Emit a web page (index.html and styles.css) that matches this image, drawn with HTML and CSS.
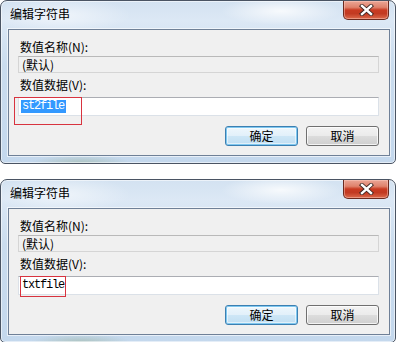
FILE: index.html
```html
<!DOCTYPE html>
<html lang="zh-CN">
<head>
<meta charset="utf-8">
<title>编辑字符串</title>
<link rel="stylesheet" href="styles.css">
</head>
<body>
<div class="stack">
  <div class="dialog">
    <div class="titlebar">
      <span class="title">编辑字符串</span>
      <div class="close">
        <svg width="15" height="12" viewBox="0 0 15 12"><path d="M3 2 L12 10 M12 2 L3 10" stroke="#3b2420" stroke-width="4.2" stroke-linecap="square" fill="none"/><path d="M3 2 L12 10 M12 2 L3 10" stroke="#fff" stroke-width="2.4" stroke-linecap="square" fill="none"/></svg>
      </div>
    </div>
    <div class="panel">
      <div class="label">数值名称(N):</div>
      <div class="field readonly">(默认)</div>
      <div class="label second">数值数据(V):</div>
      <div class="field edit"><span class="mono sel">st2file</span><span class="mark mark-a"></span></div>
      <div class="buttons">
        <div class="btn default">确定</div>
        <div class="btn">取消</div>
      </div>
    </div>
  </div>

  <div class="dialog">
    <div class="titlebar">
      <span class="title">编辑字符串</span>
      <div class="close">
        <svg width="15" height="12" viewBox="0 0 15 12"><path d="M3 2 L12 10 M12 2 L3 10" stroke="#3b2420" stroke-width="4.2" stroke-linecap="square" fill="none"/><path d="M3 2 L12 10 M12 2 L3 10" stroke="#fff" stroke-width="2.4" stroke-linecap="square" fill="none"/></svg>
      </div>
    </div>
    <div class="panel">
      <div class="label">数值名称(N):</div>
      <div class="field readonly">(默认)</div>
      <div class="label second">数值数据(V):</div>
      <div class="field edit"><span class="mono">txtfile</span><span class="mark mark-b"></span></div>
      <div class="buttons">
        <div class="btn default">确定</div>
        <div class="btn">取消</div>
      </div>
    </div>
  </div>
</div>
</body>
</html>
```

FILE: styles.css
```css
* { box-sizing: border-box; }
html, body { margin: 0; padding: 0; background: #fff; }
body {
  font-family: "Noto Sans CJK SC", "Liberation Sans", sans-serif;
  font-size: 12px;
  color: #000;
}
.stack {
  display: flex;
  flex-direction: column;
  gap: 15px;
  width: 397px;
}
.dialog {
  width: 396px;
  height: 164px;
  border: 1px solid #4a5463;
  border-radius: 7px 7px 5px 5px;
  padding: 0 5px 7px 7px;
  display: flex;
  flex-direction: column;
  background:
    radial-gradient(ellipse 40px 10px at 270px 40px, rgba(150,170,200,0.55), rgba(150,170,200,0) 100%),
    radial-gradient(ellipse 60px 14px at 280px 10px, rgba(255,255,255,0.8), rgba(255,255,255,0) 100%),
    radial-gradient(ellipse 70px 18px at 60px 14px, rgba(255,255,255,0.55), rgba(255,255,255,0) 100%),
    radial-gradient(ellipse 50px 8px at 80px 162px, rgba(150,175,150,0.5), rgba(150,175,150,0) 100%),
    linear-gradient(180deg, #d3e2f1 0%, #dce8f5 12%, #cadcee 40%, #c4d8ed 100%);
  box-shadow: inset 0 0 0 1px rgba(255,255,255,0.55);
}
.titlebar {
  height: 28px;
  display: flex;
  justify-content: space-between;
  align-items: flex-start;
}
.title {
  padding: 4px 0 0 2px;
  font-size: 12px;
  line-height: 18px;
  color: #000;
}
.close {
  width: 46px;
  height: 19px;
  margin-right: 1px;
  border: 1px solid #6b2a1f;
  border-top: none;
  border-radius: 0 0 5px 5px;
  background: linear-gradient(180deg, #eba696 0%, #df826c 35%, #c93b22 50%, #c23a22 70%, #dc6a4c 100%);
  box-shadow: inset 0 0 0 1px rgba(255,210,200,0.45);
  display: flex;
  align-items: center;
  justify-content: center;
}
.close svg { display: block; }
.panel {
  height: 127px;
  border: 1px solid #6f8097;
  background: #f0f0f0;
  padding: 9px 10px 8px 9px;
  display: flex;
  flex-direction: column;
  box-shadow: 0 0 0 1px rgba(255,255,255,0.6);
}
.label {
  height: 16px;
  line-height: 16px;
  padding-left: 2px;
  font-size: 12px;
  color: #000;
}
.label.second { margin-top: 4px; }
.field {
  position: relative;
  display: flex;
  align-items: center;
  padding-left: 3px;
}
.readonly {
  height: 17px;
  margin-top: 1px;
  border: 1px solid #d5d5d5;
  border-top-color: #b9b9b9;
  background: #f0f0f0;
  font-size: 12px;
  line-height: 15px;
}
.edit {
  height: 19px;
  margin-top: 4px;
  border: 1px solid #dbe1e8;
  border-top-color: #abadb3;
  background: #fff;
}
.mono {
  font-family: "Liberation Mono", "DejaVu Sans Mono", monospace;
  font-size: 12px;
  letter-spacing: -1.2px;
  line-height: 13px;
  color: #000;
}
.sel {
  background: #3399ff;
  color: #fff;
  padding: 0 2px 0 1px;
  margin-left: -1px;
}
.mark {
  position: absolute;
  border: 1px solid #d8333f;
}
.mark-a { left: -5px; top: -1px; width: 68px; height: 28px; }
.mark-b { left: 1px; top: -1px; width: 46px; height: 21px; }
.buttons {
  display: flex;
  justify-content: flex-end;
  gap: 8px;
  margin-top: 10px;
}
.btn {
  width: 73px;
  height: 20px;
  border: 1px solid #707070;
  border-radius: 3px;
  background: linear-gradient(180deg, #f3f3f3 0%, #ebebeb 48%, #dcdcdc 52%, #cfcfcf 100%);
  box-shadow: inset 0 0 0 1px rgba(255,255,255,0.75);
  display: flex;
  align-items: center;
  justify-content: center;
  font-size: 12px;
  line-height: 16px;
  color: #000;
}
.btn.default {
  border-color: #3c7fb1;
  background: linear-gradient(180deg, #eef7fc 0%, #e2f0fa 48%, #cde6f6 52%, #c0def2 100%);
  box-shadow: inset 0 0 0 1px #7fc8f0, inset 0 0 0 2px rgba(255,255,255,0.5);
}
```
